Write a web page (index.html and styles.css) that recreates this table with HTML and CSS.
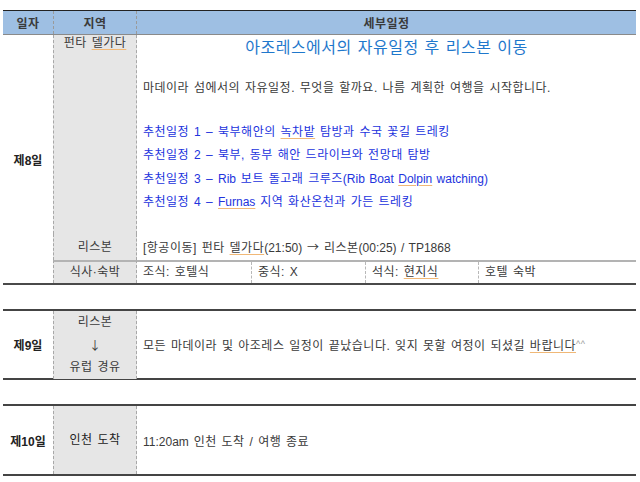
FILE: index.html
```html
<!DOCTYPE html>
<html lang="ko">
<head>
<meta charset="utf-8">
<link rel="stylesheet" href="styles.css">
</head>
<body>
<div class="sheet">
  <div class="cols head">
    <div class="hc">일자</div>
    <div class="hc vl vr">지역</div>
    <div class="hc">세부일정</div>
  </div>

  <div class="cols day8">
    <div class="date span3">제8일</div>
    <div class="region r-top"><span>펀타 <u class="sp">델가다</u></span></div>
    <div class="detail d-top">
      <div class="title">아조레스에서의 자유일정 후 리스본 이동</div>
      <div class="para">마데이라 섬에서의 자유일정. 무엇을 할까요. 나름 계획한 여행을 시작합니다.</div>
      <ul class="plan">
        <li>추천일정 1 – 북부해안의 <u class="sp">녹차밭</u> 탐방과 수국 꽃길 트레킹</li>
        <li>추천일정 2 – 북부, 동부 해안 드라이브와 전망대 탐방</li>
        <li>추천일정 3 – <span class="lt">Rib</span> 보트 돌고래 크루즈<span class="lt">(Rib Boat <u class="sp">Dolpin</u> watching)</span></li>
        <li>추천일정 4 – <u class="sp lt">Furnas</u> 지역 화산온천과 가든 트레킹</li>
      </ul>
    </div>
    <div class="region r-bot">리스본</div>
    <div class="detail flight">[항공이동] 펀타 <u class="sp">델가다</u><span class="lt">(21:50)</span> <span class="arw">→</span> 리스본<span class="lt">(00:25) / TP1868</span></div>
    <div class="region mlabel">식사·숙박</div>
    <div class="meals">
      <div class="meal">조식: 호텔식</div>
      <div class="meal dl">중식: X</div>
      <div class="meal dl">석식: <u class="sp">현지식</u></div>
      <div class="meal dl">호텔 숙박</div>
    </div>
  </div>

  <div class="cols day day9">
    <div class="date">제9일</div>
    <div class="region stack">
      <div>리스본</div>
      <div class="arw">↓</div>
      <div>유럽 경유</div>
    </div>
    <div class="detail mid"><span>모든 마데이라 및 아조레스 일정이 끝났습니다. 잊지 못할 여정이 되셨길 <u class="sp">바랍니다</u><sup class="hat">^^</sup></span></div>
  </div>

  <div class="cols day day10">
    <div class="date">제10일</div>
    <div class="region stack dark">인천 도착</div>
    <div class="detail mid"><span><span class="lt">11:20am</span> 인천 도착 / 여행 종료</span></div>
  </div>
</div>
</body>
</html>
```

FILE: styles.css
```css
* { box-sizing: border-box; }

body {
  margin: 0;
  background: #ffffff;
  font-family: "Liberation Sans", "Noto Sans CJK KR", sans-serif;
  font-size: 12px;
  color: #3a3a3a;
  letter-spacing: 0.5px;
  word-spacing: 1px;
}

.sheet {
  margin: 10px 0 0 3px;
  width: 633px;
}

.cols {
  display: grid;
  grid-template-columns: 50px 84px 499px;
}

.head {
  height: 25px;
  background: #9ebfe3;
  border-top: 1px solid #222222;
  border-bottom: 1px solid #8a8a8a;
}

.hc {
  display: flex;
  align-items: center;
  justify-content: center;
  font-weight: bold;
  color: #3a3a3a;
}

.vl { border-left: 1px dashed #9a9a9a; }
.vr { border-right: 1px dashed #9a9a9a; }

.day8 {
  grid-template-rows: 199px 26px 23px;
  border-bottom: 2px solid #4a4a4a;
}

.date {
  display: flex;
  align-items: center;
  justify-content: center;
  font-weight: bold;
  color: #222222;
  letter-spacing: 0;
}

.span3 {
  grid-column: 1;
  grid-row: 1 / 4;
}

.region {
  background: #e6e6e6;
  border-left: 1px dashed #a8a8a8;
  border-right: 1px dashed #a8a8a8;
  text-align: center;
}

.r-top {
  grid-column: 2;
  grid-row: 1;
  line-height: 17px;
}

.r-bot {
  grid-column: 2;
  grid-row: 2;
  line-height: 26px;
}

.detail {
  padding-left: 6px;
}

.d-top {
  grid-column: 3;
  grid-row: 1;
}

.title {
  line-height: 26px;
  font-size: 16px;
  text-align: center;
  color: #1f78cc;
  padding-right: 6px;
}

.para {
  margin-top: 16px;
  line-height: 23px;
}

.plan {
  list-style: none;
  margin: 21px 0 0;
  padding: 0;
  color: #2233dd;
}

.plan li {
  line-height: 23.3px;
}

.lt {
  letter-spacing: 0;
}

.arw {
  font-family: "Noto Sans CJK KR", sans-serif;
  letter-spacing: 0;
}

.flight {
  grid-column: 3;
  grid-row: 2;
  line-height: 26px;
}

.mlabel {
  grid-column: 2;
  grid-row: 3;
  border-top: 2px solid #b3b3b3;
  line-height: 21px;
}

.meals {
  grid-column: 3;
  grid-row: 3;
  border-top: 2px solid #b3b3b3;
  display: grid;
  grid-template-columns: 114px 114px 113px 1fr;
}

.meal {
  padding-left: 6px;
  line-height: 21px;
}

.dl { border-left: 1px dashed #b8b8b8; }

.sp {
  text-decoration: underline;
  text-decoration-color: #f0b877;
  text-underline-offset: 2px;
}

.day {
  margin-top: 24px;
  border-top: 2px solid #444444;
  border-bottom: 2px solid #444444;
}

.day9 { height: 71px; }
.day10 { height: 72px; }

.stack {
  display: flex;
  flex-direction: column;
  align-items: center;
  justify-content: center;
  line-height: 22.5px;
}

.dark { color: #222222; }

.mid {
  display: flex;
  align-items: center;
}

.hat {
  color: #999999;
  font-size: 9px;
  vertical-align: 3px;
  line-height: 0;
}
```
